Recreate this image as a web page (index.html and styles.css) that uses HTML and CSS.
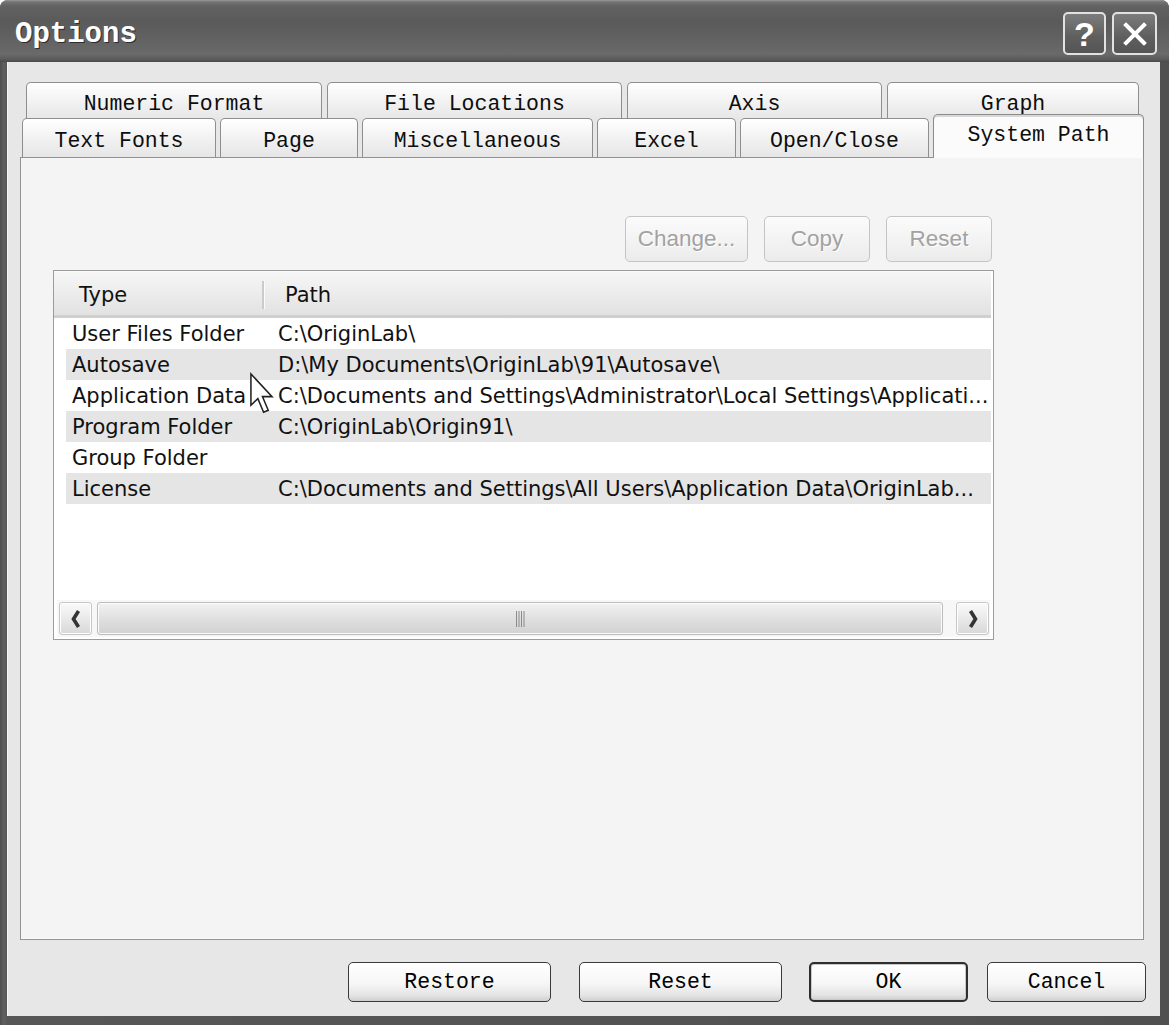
FILE: index.html
```html
<!DOCTYPE html>
<html lang="en">
<head>
<meta charset="utf-8">
<title>Options</title>
<link rel="stylesheet" href="styles.css">
</head>
<body>
<div class="window">
  <div class="titlebar">
    <span class="title">Options</span>
    <div class="tb-buttons">
      <span class="tb-btn help">?</span>
      <span class="tb-btn close">
        <svg width="26" height="26" viewBox="0 0 26 26"><path d="M4 4 L22 22 M22 4 L4 22" stroke="#fff" stroke-width="4" stroke-linecap="square" fill="none"/></svg>
      </span>
    </div>
  </div>

  <div class="client">
    <div class="tabs">
      <div class="tab-row back">
        <div class="tab w-numeric">Numeric Format</div>
        <div class="tab w-files">File Locations</div>
        <div class="tab w-axis">Axis</div>
        <div class="tab w-graph">Graph</div>
      </div>
      <div class="tab-row front">
        <div class="tab w-fonts">Text Fonts</div>
        <div class="tab w-page">Page</div>
        <div class="tab w-misc">Miscellaneous</div>
        <div class="tab w-excel">Excel</div>
        <div class="tab w-open">Open/Close</div>
        <div class="tab selected w-sys">System Path</div>
      </div>
    </div>

    <div class="panel">
      <div class="panel-inner">
        <div class="path-actions">
          <button class="btn-flat w-change" disabled>Change...</button>
          <button class="btn-flat w-small" disabled>Copy</button>
          <button class="btn-flat w-small" disabled>Reset</button>
        </div>

        <div class="listview">
          <div class="lv-header">
            <div class="lv-h col-type">Type</div>
            <div class="lv-sep"></div>
            <div class="lv-h col-path">Path</div>
          </div>
          <div class="lv-body">
            <div class="lv-row"><span class="c1">User Files Folder</span><span class="c2">C:\OriginLab\</span></div>
            <div class="lv-row alt"><span class="c1">Autosave</span><span class="c2">D:\My Documents\OriginLab\91\Autosave\</span></div>
            <div class="lv-row"><span class="c1">Application Data</span><span class="c2">C:\Documents and Settings\Administrator\Local Settings\Applicati...</span></div>
            <div class="lv-row alt"><span class="c1">Program Folder</span><span class="c2">C:\OriginLab\Origin91\</span></div>
            <div class="lv-row"><span class="c1">Group Folder</span><span class="c2"></span></div>
            <div class="lv-row alt"><span class="c1">License</span><span class="c2">C:\Documents and Settings\All Users\Application Data\OriginLab...</span></div>
          </div>
          <div class="hscroll">
            <div class="sb-btn">
              <svg width="12" height="20" viewBox="0 0 12 20"><path d="M8.5 2 L3.5 10 L8.5 18" stroke="#333" stroke-width="3.6" fill="none"/></svg>
            </div>
            <div class="sb-track">
              <div class="sb-thumb">
                <svg width="10" height="16" viewBox="0 0 10 16"><path d="M1.5 0 V16 M4 0 V16 M6.5 0 V16 M9 0 V16" stroke="#8a8a8a" stroke-width="1" fill="none"/></svg>
              </div>
            </div>
            <div class="sb-btn">
              <svg width="12" height="20" viewBox="0 0 12 20"><path d="M3.5 2 L8.5 10 L3.5 18" stroke="#333" stroke-width="3.6" fill="none"/></svg>
            </div>
          </div>
          <svg class="cursor" width="25" height="43" viewBox="0 0 13 22" preserveAspectRatio="none"><path d="M1 1 L1 17 L4.6 13.6 L7.6 20.6 L10 19.6 L7 12.6 L12 12.6 Z" fill="#fff" stroke="#222" stroke-width="0.8" stroke-linejoin="miter"/></svg>
        </div>
      </div>
    </div>

    <div class="dlg-buttons">
      <button class="dlg-btn w-restore">Restore</button>
      <button class="dlg-btn w-reset">Reset</button>
      <button class="dlg-btn default w-ok">OK</button>
      <button class="dlg-btn w-cancel">Cancel</button>
    </div>
  </div>
</div>
</body>
</html>
```

FILE: styles.css
```css
html, body {
  margin: 0;
  padding: 0;
  background: #ffffff;
}

body {
  width: 1169px;
  height: 1025px;
  overflow: hidden;
}

.window {
  width: 1169px;
  height: 1025px;
  display: flex;
  flex-direction: column;
  background: linear-gradient(to right, #4e4e4e 0, #606060 4px, #575757 7px, #505050 100%);
  border-radius: 8px 8px 0 0;
  overflow: hidden;
}

/* ---------- title bar ---------- */
.titlebar {
  height: 62px;
  flex: none;
  display: flex;
  align-items: center;
  justify-content: space-between;
  padding: 0 12px 0 15px;
  background: linear-gradient(to bottom,
    #9a9a9a 0, #737373 2px, #626262 6px, #5a5a5a 22px,
    #626262 40px, #6a6a6a 54px, #5c5c5c 59px, #4a4a4a 62px);
}

.title {
  font-family: "Liberation Mono", monospace;
  font-weight: bold;
  font-size: 29px;
  color: #ffffff;
  text-shadow: 1px 1px 0 #2e2e2e;
  margin-top: 6px;
}

.tb-buttons {
  display: flex;
  gap: 6px;
  margin-top: 5px;
}

.tb-btn {
  width: 43px;
  height: 43px;
  box-sizing: border-box;
  border: 2px solid #e2e2e2;
  border-radius: 5px;
  background: linear-gradient(to bottom, #7c7c7c, #5e5e5e 60%, #555555);
  display: flex;
  align-items: center;
  justify-content: center;
  color: #ffffff;
}

.tb-btn.close {
  width: 45px;
}

.tb-btn.help {
  font-family: "Liberation Sans", sans-serif;
  font-weight: bold;
  font-size: 34px;
  line-height: 1;
}

/* ---------- client area ---------- */
.client {
  flex: 1;
  margin: 0 9px 9px 7px;
  background: #e7e7e7;
  display: flex;
  flex-direction: column;
  padding: 20px 14px 14px 13px;
  box-shadow: inset 1px 0 0 #f6f6f6;
}

/* ---------- tabs ---------- */
.tabs {
  flex: none;
}

.tab-row {
  display: flex;
}

.tab-row.back {
  margin-left: 6px;
  gap: 5px;
  height: 38px;
}

.tab-row.front {
  margin-left: 2px;
  gap: 4px;
  margin-top: -6px;
  height: 43px;
  align-items: flex-end;
}

.tab {
  box-sizing: border-box;
  height: 100%;
  border: 1px solid #8e8e8e;
  border-bottom: none;
  border-radius: 5px 5px 0 0;
  background: linear-gradient(to bottom, #ffffff, #f2f2f2 50%, #e6e6e6);
  display: flex;
  align-items: center;
  justify-content: center;
  font-family: "Liberation Mono", monospace;
  font-size: 21.5px;
  color: #0d0d0d;
  padding-top: 4px;
  white-space: nowrap;
}

.tab-row.front .tab {
  height: 39px;
  padding-top: 5px;
}

.tab-row.front .tab.selected {
  height: 44px;
  margin-bottom: -1px;
  position: relative;
  z-index: 1;
  background: #fbfbfb;
  border-color: #8a8a8a;
  padding-top: 0;
  padding-bottom: 3px;
  box-shadow: inset 0 2px 0 #d8d8d8;
}

.w-numeric { width: 296px; }
.w-files   { width: 295px; }
.w-axis    { width: 255px; }
.w-graph   { width: 252px; }

.w-fonts { width: 194px; }
.w-page  { width: 138px; }
.w-misc  { width: 231px; }
.w-excel { width: 139px; }
.w-open  { width: 189px; }
.w-sys   { width: 211px; }

/* ---------- panel ---------- */
.panel {
  flex: 1;
  margin-right: 2px;
  box-sizing: border-box;
  border: 1px solid #929292;
  background: #f4f4f4;
  padding: 58px 0 0 32px;
  box-shadow: inset -1px -1px 0 #fafafa;
}

.panel-inner {
  width: 941px;
}

.path-actions {
  display: flex;
  justify-content: flex-end;
  gap: 16px;
  margin-right: 2px;
  height: 46px;
}

.btn-flat {
  box-sizing: border-box;
  height: 46px;
  border: 1px solid #c4c4c4;
  border-radius: 5px;
  background: linear-gradient(to bottom, #fbfbfb, #f2f2f2 60%, #ebebeb);
  color: #a2a2a2;
  font-family: "Liberation Sans", sans-serif;
  font-size: 22.5px;
  padding: 0;
  text-shadow: 1px 1px 0 #ffffff;
}

.w-change { width: 123px; }
.w-small  { width: 106px; }

/* ---------- list view ---------- */
.listview {
  position: relative;
  margin-top: 8px;
  height: 370px;
  box-sizing: border-box;
  border: 1px solid #9c9c9c;
  background: #ffffff;
  display: flex;
  flex-direction: column;
  font-family: "DejaVu Sans", sans-serif;
  font-size: 21px;
  color: #111111;
}

.lv-header {
  flex: none;
  height: 47px;
  box-sizing: border-box;
  margin-right: 2px;
  padding-top: 3px;
  display: flex;
  align-items: center;
  background: linear-gradient(to bottom, #f6f6f6, #ececec 50%, #e2e2e2);
  border-top: 1px solid #fafafa;
  border-bottom: 3px solid #cfcfcf;
}

.col-type {
  width: 208px;
  box-sizing: border-box;
  padding-left: 25px;
  flex: none;
}

.lv-sep {
  width: 2px;
  height: 28px;
  background: #cbcbcb;
  border-right: 1px solid #fbfbfb;
  flex: none;
}

.col-path {
  padding-left: 20px;
}

.lv-body {
  flex: 1;
}

.lv-row {
  height: 31px;
  margin: 0 2px 0 12px;
  padding-left: 6px;
  display: flex;
  align-items: center;
  white-space: nowrap;
}

.lv-row.alt {
  background: #e5e5e5;
}

.c1 {
  width: 206px;
  flex: none;
}

.c2 {
  flex: 1;
  overflow: hidden;
  white-space: nowrap;
}

/* ---------- horizontal scrollbar ---------- */
.hscroll {
  flex: none;
  height: 37px;
  margin: 0 3px 2px 3px;
  padding: 0 2px;
  box-sizing: border-box;
  display: flex;
  align-items: center;
  background: #f7f7f7;
}

.sb-btn {
  width: 33px;
  height: 33px;
  box-sizing: border-box;
  flex: none;
  border: 1px solid #c6c6c6;
  border-radius: 3px;
  background: linear-gradient(to bottom, #fafafa, #e6e6e6 60%, #d8d8d8);
  box-shadow: inset 0 0 0 1px #ffffff;
  display: flex;
  align-items: center;
  justify-content: center;
}

.sb-track {
  flex: 1;
  height: 33px;
  margin: 0 13px 0 5px;
  display: flex;
}

.sb-thumb {
  width: 846px;
  height: 33px;
  box-sizing: border-box;
  border: 1px solid #bcbcbc;
  border-radius: 3px;
  background: linear-gradient(to bottom, #f2f2f2, #dedede 55%, #d2d2d2);
  box-shadow: inset 0 0 0 1px #fbfbfb;
  display: flex;
  align-items: center;
  justify-content: center;
}

.cursor {
  position: absolute;
  left: 195px;
  top: 101px;
}

/* ---------- dialog buttons ---------- */
.dlg-buttons {
  flex: none;
  display: flex;
  justify-content: flex-end;
  margin-top: 22px;
  height: 40px;
}

.dlg-btn {
  box-sizing: border-box;
  height: 40px;
  border: 1px solid #3a3a3a;
  border-radius: 5px;
  background: linear-gradient(to bottom, #ffffff, #f6f6f6 55%, #e4e4e4 85%, #cfcfcf);
  font-family: "Liberation Mono", monospace;
  font-size: 21.5px;
  color: #000000;
  padding: 0;
}

.dlg-btn.default {
  border: 2px solid #2e2e2e;
  box-shadow: inset 0 0 0 1px #c9c9c9;
}

.w-restore { width: 203px; }
.w-reset   { width: 203px; margin-left: 28px; }
.w-ok      { width: 159px; margin-left: 27px; }
.w-cancel  { width: 159px; margin-left: 19px; }
```
